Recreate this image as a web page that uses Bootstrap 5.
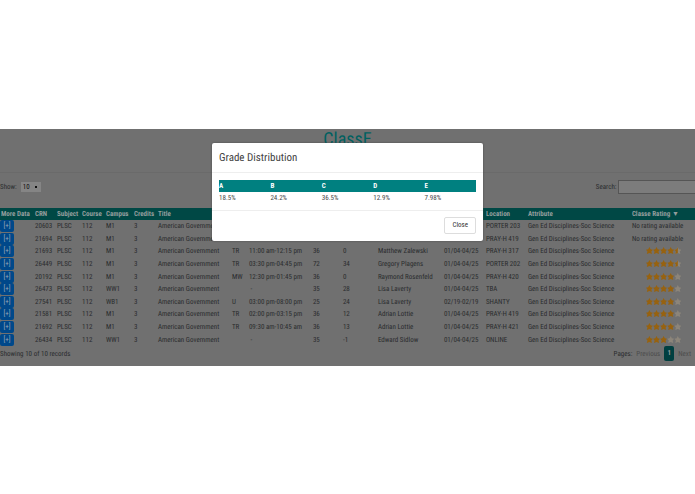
<!DOCTYPE html>
<html lang="en">
<head>
<meta charset="utf-8">
<meta name="viewport" content="width=device-width, initial-scale=1">
<title>ClassE</title>
<link rel="stylesheet" href="https://cdn.jsdelivr.net/npm/bootstrap@5.3.0/dist/css/bootstrap.min.css">
<style>
body{font:7px/12px "Roboto Condensed","Liberation Sans Narrow",Roboto,sans-serif;color:#2a2c2e;background:#fff;text-rendering:geometricPrecision}
.page-wrap{padding-top:129px}
.dimmed{background:#707070;padding-bottom:5px;overflow:hidden}
.brand{color:#006060;font-size:18px;line-height:22px;height:44px;border-bottom:1px solid #6a6a6a}
.tools{padding:7px 0 14px}
.tools select{font:inherit;width:20px;height:10px;line-height:10px;color:#111;background:#858585 linear-gradient(#111,#111) no-repeat right 4px center/2px 2px;border:0;border-radius:0;padding:0 2px;appearance:none}
.tools input{font:inherit;width:77px;height:14px;background:#7c7c7c;border:1px solid #555;border-right:0;border-radius:0;padding:0 2px}
.courses{table-layout:fixed;height:138px;white-space:nowrap}
.courses th,.courses td{padding:0 0 0 1px;line-height:12px}
.courses th{background:#004845;color:#939d9d;font-weight:700}
.courses td:first-child{padding:0}
.more{display:block;font-size:7px;line-height:12px;width:14px;height:12px;padding:0;border:0;border-radius:2px;background:#00488a;color:#96a8b8}
.rating{display:block;margin-left:14px;width:36px;height:8px}
.foot a{color:#4c4c4c;text-decoration:none}
.foot .now{background:#003f40;color:#939d9d;border-radius:2px;width:10px;line-height:15px;text-align:center}
.overlay{position:absolute;top:143px;left:0;right:0}
.grade{width:271px;margin:0 auto;background:#fff;border:0;border-radius:2px;box-shadow:0 0 2px #444}
.grade .modal-header{padding:8px 7px 7px;border-bottom:1px solid #eee;border-radius:0}
.grade h2{font-size:11px;line-height:14px;margin:0;font-weight:400;color:#444}
.grade .modal-body{padding:7px 7px 5px}
.grade .modal-body table{table-layout:fixed}
.grade th{background:teal;color:#fff;font-weight:700;padding:0;line-height:12px}
.grade td{padding:0;line-height:13px;color:#444}
.grade .modal-footer{padding:6px 7px 7px;border-top:1px solid #eee}
.grade .btn{font-family:inherit;font-size:7px;line-height:15px;padding:0 7px;margin:0;border:1px solid #ddd;border-radius:2px;color:#333;background:#fff}
</style>
</head>
<body>
<svg width="0" height="0" class="position-absolute" aria-hidden="true"><defs>
<path id="st" d="M3.500 0 4.700 2.200 7 2.600 5.500 4.400 6.100 7 3.500 6.100 .9 7 1.500 4.400 0 2.600 2.300 2.200z"/>
<path id="half" d="M3.500 0V6.100L.9 7 1.500 4.400 0 2.600 2.300 2.200z"/>
</defs></svg>
<div class="page-wrap">
<main class="dimmed">
<h1 class="brand text-center m-0 fw-normal">ClassE</h1>
<div class="tools d-flex justify-content-between align-items-center">
<label class="d-flex align-items-center gap-1">Show: <select><option>10</option></select></label>
<label class="d-flex align-items-center">Search:&nbsp;<input type="search"></label>
</div>
<table class="courses w-100">
<colgroup id="cols"></colgroup>
<thead><tr><th>More Data</th><th>CRN</th><th>Subject</th><th>Course</th><th>Campus</th><th>Credits</th><th>Title</th><th></th><th></th><th></th><th></th><th></th><th></th><th>Location</th><th>Attribute</th><th>Classe Rating ▼</th></tr></thead>
<tbody id="rows"></tbody>
</table>
<div class="foot d-flex justify-content-between align-items-center">
<span>Showing 10 of 10 records</span>
<nav class="d-flex align-items-center gap-1 pe-1" aria-label="Pages"><span>Pages:</span><a href="#">Previous</a><b class="now">1</b><a href="#">Next</a></nav>
</div>
</main>
</div>
<div class="overlay" role="dialog" aria-labelledby="gradeTitle">
<div class="modal-content grade">
<div class="modal-header"><h2 class="modal-title" id="gradeTitle">Grade Distribution</h2></div>
<div class="modal-body">
<table class="w-100"><thead><tr><th>A</th><th>B</th><th>C</th><th>D</th><th>E</th></tr></thead>
<tbody><tr><td>18.5%</td><td>24.2%</td><td>36.5%</td><td>12.9%</td><td>7.98%</td></tr></tbody></table>
</div>
<div class="modal-footer"><button type="button" class="btn">Close</button></div>
</div>
</div>
<script>
const widths = [34, 22, 25, 24, 28, 24, 74, 17, 64, 30, 35, 66, 42, 42, 104, 64];
const total = widths.reduce((a, b) => a + b);
document.getElementById('cols').innerHTML = widths.map(w => `<col style="width:${w / total * 100}%">`).join('');
const data = [
 ['20603','M1','','','','','','','PORTER 203',null],
 ['21694','M1','','','','','','','PRAY-H 419',null],
 ['21693','M1','TR','11:00 am-12:15 pm','36','0','Matthew Zalewski','01/04-04/25','PRAY-H 317',4.5],
 ['26449','M1','TR','03:30 pm-04:45 pm','72','34','Gregory Plagens','01/04-04/25','PORTER 202',4.5],
 ['20192','M1','MW','12:30 pm-01:45 pm','36','0','Raymond Rosenfeld','01/04-04/25','PRAY-H 420',4],
 ['26473','WW1','','&nbsp;-','35','28','Lisa Laverty','01/04-04/25','TBA',4],
 ['27541','WB1','U','03:00 pm-08:00 pm','25','24','Lisa Laverty','02/19-02/19','SHANTY',4],
 ['21581','M1','TR','02:00 pm-03:15 pm','36','12','Adrian Lottie','01/04-04/25','PRAY-H 419',4],
 ['21692','M1','TR','09:30 am-10:45 am','36','13','Adrian Lottie','01/04-04/25','PRAY-H 421',4],
 ['26434','WW1','','&nbsp;-','35','-1','Edward Sidlow','01/04-04/25','ONLINE',3]
];
const stars = n => {
  if (n === null) return 'No rating available';
  let s = '';
  for (let i = 0; i < 5; i++) {
    const x = i * 7.3;
    s += `<use href="#st" x="${x}" fill="${i < Math.floor(n) ? '#97620f' : '#8c857a'}"/>`;
    if (i < n && i + 1 > n) s += `<use href="#half" x="${x}" fill="#97620f"/>`;
  }
  return `<svg class="rating" viewBox="0 0 37 8" role="img" aria-label="${n} of 5">${s}</svg>`;
};
document.getElementById('rows').innerHTML = data.map(d => {
  const c = ['<button type="button" class="more">[+]</button>', d[0], 'PLSC', '112', d[1], '3', 'American Government', ...d.slice(2, 9), 'Gen Ed Disciplines-Soc Science', stars(d[9])];
  return '<tr>' + c.map(v => `<td>${v}</td>`).join('') + '</tr>';
}).join('');
</script>
</body>
</html>
